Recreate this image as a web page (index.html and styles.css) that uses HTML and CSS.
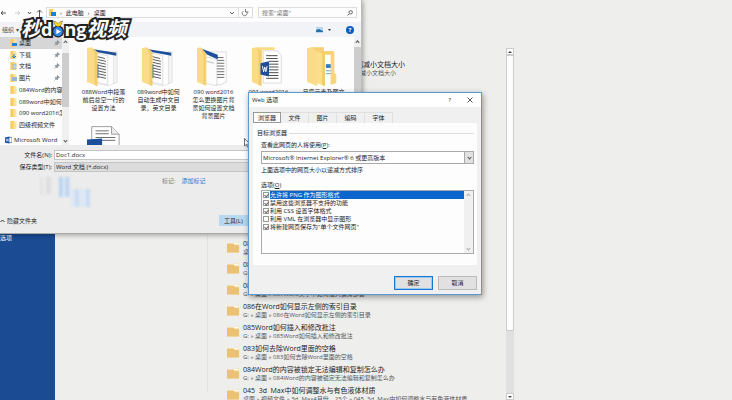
FILE: index.html
```html
<!DOCTYPE html>
<html lang="zh-CN">
<head>
    <meta charset="UTF-8">
    <meta name="viewport" content="width=device-width, initial-scale=1.0">
    <title>Web 选项</title>
    <link rel="stylesheet" href="styles.css">
</head>
<body>
    <!-- shared icons -->
    <svg class="sprite" aria-hidden="true">
        <symbol id="folder" viewBox="0 0 14 12">
            <path d="M0 2h7l1.500-1.500H13V12H0z" fill="#f3dfae"/>
            <path d="M8 1.300h4.500V3H7z" fill="#fff"/>
            <path d="M0 2.500h7L8.500 4H13v8H0z" fill="#ebc173"/>
        </symbol>
        <symbol id="mini" viewBox="0 0 6 8">
            <path d="M0 0h4l2 1v7H0z" fill="#fbe29b"/>
            <path d="M0 0h3v8H0z" fill="#f7cd62"/>
        </symbol>
        <symbol id="pin" viewBox="0 0 6 6">
            <path d="M3.500.5l2 2-1 .3-1 1L3.300 5 1 2.700l1.200-.2 1-1zM2 4L.5 5.500" fill="#8b98a5" stroke="#76838f" stroke-width=".6"/>
        </symbol>
        <symbol id="docs" viewBox="0 0 36 42">
            <path d="M12 5h19v32l-8 4-11-2z" fill="#fff" stroke="#ddd" stroke-width=".7"/>
            <path d="M28 5h4v32l-4 2z" fill="#f3f3f3" stroke="#ccc" stroke-width=".5"/>
            <path d="M5 2l26 4v3L10 5z" fill="#1d4f9a"/>
            <path d="M10 6l12 3v31l-12-3z" fill="#fcfcfc" stroke="#bbb" stroke-width=".5"/>
            <path d="M11 10l8 2M11 13l9 2M11 16l9 2M11 19l9 2M11 22l9 2M11 25l9 2M11 28l9 2M11 31l9 2" stroke="#555" stroke-width="1"/>
            <path d="M9 17l3 1v15l-3-1z" fill="#1d4f9a"/>
            <path d="M0 1l5-1 6 5v36L0 37z" fill="#fbdb87"/>
            <path d="M5 1l6 5v35l-3-1V7z" fill="#f2cb6d"/>
        </symbol>
        <symbol id="docs-plain" viewBox="0 0 36 42">
            <path d="M14 5h17v32l-6 3-11-2z" fill="#fff" stroke="#ccc" stroke-width=".7"/>
            <path d="M20 11h8M21 14h8M21 17h8M21 20h8M21 23h8M21 26h8M21 29h8M21 32h8" stroke="#666"/>
            <path d="M3 1l19 7v5L5 5z" fill="#1d4f9a"/>
            <path d="M8 10l13 3v28L8 38z" fill="#fcfcfc" stroke="#bbb" stroke-width=".5"/>
            <path d="M10 15l8 2" stroke="#bbb"/>
            <path d="M0 1l4-1 6 7v34L0 37z" fill="#fbdb87"/>
            <path d="M4 1l5 6v33l-2-1V8z" fill="#f2cb6d"/>
        </symbol>
        <symbol id="docs-word" viewBox="0 0 36 42">
            <path d="M12 4h15l4 5v29H12z" fill="#fff" stroke="#ccc" stroke-width=".7"/>
            <path d="M15 9h12M15 12h12M18 15h10M18 18h10M18 21h10M18 24h10M18 27h10M15 30h13M15 33h13" stroke="#444"/>
            <path d="M0 1l5-1h19v3H11l-1 38L0 37z" fill="#fbdb87"/>
            <path d="M5 1l5 4v36l-3-1V6z" fill="#f2cb6d"/>
            <path d="M9 17l9-2v16l-9-2z" fill="#1d4f9a"/>
            <path d="M11 20l1.300 6 1.200-5 1.200 5 1.300-6" fill="none" stroke="#fff" stroke-width="1"/>
        </symbol>
        <symbol id="folders" viewBox="0 0 36 42">
            <path d="M4 0h14v4h10v34L4 36z" fill="#f5cf72"/>
            <path d="M19 8h7v30h-7z" fill="#fff"/>
            <path d="M20 18h6v4h-6z" fill="#2f7bc4"/>
            <path d="M20 25h6M20 28h6" stroke="#56a2d8"/>
            <path d="M25 5h4v22l2 2v9l-6 2z" fill="#f7d47e"/>
            <path d="M0 1l5-1 6 5v36L0 37z" fill="#fbdb87"/>
            <path d="M10 4l9 4v33l-9-3z" fill="#fbdd8e"/>
            <path d="M16 7l3 1v33l-3-1z" fill="#f2cb6d"/>
        </symbol>
    </svg>

    <!-- backstage view behind the windows -->
    <main class="backstage">
        <aside class="bs-side"><a href="#">选项</a></aside>
        <div class="bs-mid"></div>
        <ul class="recent">
            <li class="first"><svg class="ico"></svg><div><h3>Word如何缩减小文档大小</h3><p>G: » 桌面 » Word缩减小文档大小</p></div></li>
            <li><svg class="ico"><use href="#folder"/></svg><div><h3>089word中如何自动生成</h3><p>桌面 » 089word中如何自动生成</p></div></li>
            <li><svg class="ico"><use href="#folder"/></svg><div><h3>088Word中段落前后</h3><p>G: » 桌面 » 088Word中段落前后</p></div></li>
            <li><svg class="ico"><use href="#folder"/></svg><div><h3>087Word文字中如何插入偏旁部首</h3><p>G: » 桌面 » 087Word文字中如何插入偏旁部首</p></div></li>
            <li><svg class="ico"><use href="#folder"/></svg><div><h3>086在Word如何显示左侧的索引目录</h3><p>G: » 桌面 » 086在Word如何显示左侧的索引目录</p></div></li>
            <li><svg class="ico"><use href="#folder"/></svg><div><h3>085Word如何插入和修改批注</h3><p>G: » 桌面 » 085Word如何插入和修改批注</p></div></li>
            <li><svg class="ico"><use href="#folder"/></svg><div><h3>083如何去除Word里面的空格</h3><p>G: » 桌面 » 083如何去除Word里面的空格</p></div></li>
            <li><svg class="ico"><use href="#folder"/></svg><div><h3>084Word的内容被锁定无法编辑和复制怎么办</h3><p>G: » 桌面 » 084Word的内容被锁定无法编辑和复制怎么办</p></div></li>
            <li><svg class="ico"><use href="#folder"/></svg><div><h3>045&nbsp; 3d&nbsp; Max中如何调整水与有色液体材质</h3><p>桌面 » 视频文件 » 3d&nbsp; Max4月份，25个 » 045&nbsp; 3d&nbsp; Max中如何调整水与有色液体材质</p></div></li>
        </ul>
        <div class="bs-scroll"><span class="arr up"></span><span class="thumb"></span><span class="arr down"></span></div>
    </main>

    <!-- save as window -->
    <section class="saveas">
        <div class="address">
            <svg class="nav-arrows" viewBox="0 0 46 10" fill="none" stroke="#555">
                <path d="M6 5H1M3 3L1 5l2 2"/>
                <path d="M15 5h5M18 3l2 2-2 2" stroke="#ccc"/>
                <path d="M28 4l1.500 2L31 4"/>
                <path d="M39.500 9V2M37 4.500L39.500 2 42 4.500"/>
            </svg>
            <div class="path">
                <svg class="pc" viewBox="0 0 7 8"><path d="M0 0h4v7H0z" fill="#f7cd62"/><path d="M2 3h5v4H2z" fill="#1b82d6"/></svg>
                <i>›</i><span>此电脑</span><i>›</i><span>桌面</span>
                <svg class="reload" viewBox="0 0 22 10" fill="none"><path d="M2 4l2 2 2-2" stroke="#666"/><path d="M10.500 0v10" stroke="#ddd"/><path d="M18.500 3.500a2.500 2.500 0 1 1-3-.5M17.500 1v3h3" stroke="#666" stroke-width=".8"/></svg>
            </div>
            <label class="search">
                <input type="text" placeholder='搜索"桌面"' aria-label="搜索">
                <svg viewBox="0 0 6 6" fill="none" stroke="#444" stroke-width=".8"><circle cx="3.700" cy="2.300" r="1.700"/><path d="M2.500 3.500L.5 5.500"/></svg>
            </label>
        </div>
        <div class="toolbar">
            <button class="organize">组织 ▾</button>
            <svg class="view" viewBox="0 0 16 6"><path d="M0 0h7v6H0z" fill="#b9d7ea"/><path d="M0 3l3-1 4 2v1H0z" fill="#2a70a8"/><path d="M12 2h3l-1.500 2z" fill="#333"/></svg>
            <button class="help" aria-label="帮助">?</button>
        </div>
        <div class="browse">
            <nav class="tree">
                <div class="tree-list">
                    <a href="#" class="on"><svg><use href="#mini"/><path d="M2 4h5v3H2z" fill="#1b82d6"/></svg><span>桌面</span><svg class="pin"><use href="#pin"/></svg></a>
                    <a href="#"><svg><use href="#mini"/><path d="M4 3v4M2.500 5L4 7l2-2" stroke="#1b82d6" fill="none"/></svg><span>下载</span><svg class="pin"><use href="#pin"/></svg></a>
                    <a href="#"><svg><use href="#mini"/><path d="M3 2h3v5H3z" fill="#c8dcea" stroke="#7899b0" stroke-width=".5"/></svg><span>文档</span><svg class="pin"><use href="#pin"/></svg></a>
                    <a href="#"><svg><use href="#mini"/><path d="M2 3h5v4H2z" fill="#8fb9d4"/></svg><span>图片</span><svg class="pin"><use href="#pin"/></svg></a>
                    <a href="#"><svg><use href="#mini"/></svg><span>084Word的内容</span></a>
                    <a href="#"><svg><use href="#mini"/></svg><span>089word中如何</span></a>
                    <a href="#"><svg><use href="#mini"/></svg><span>090 word2016怎</span></a>
                    <a href="#"><svg><use href="#mini"/></svg><span>四级视频文件</span></a>
                </div>
                <a href="#" class="word"><svg viewBox="0 0 8 8"><path d="M4 1h4v6H4z" fill="#fff" stroke="#1d4f9a" stroke-width=".7"/><path d="M0 1l5-1v8L0 7z" fill="#1d4f9a"/><path d="M1 2.500l.8 3 .8-3 .8 3 .7-3" stroke="#fff" stroke-width=".6" fill="none"/></svg><span>Microsoft Word</span></a>
            </nav>
            <div class="bar tree-bar"><span class="chev"></span><span class="grip"></span><span class="chev dn"></span></div>
            <div class="files">
                <figure><svg><use href="#docs"/></svg><figcaption>088Word中段落前后总空一行的设置方法</figcaption></figure>
                <figure><svg><use href="#docs"/></svg><figcaption>089word中如何自动生成中文目录，英文目录</figcaption></figure>
                <figure><svg><use href="#docs-plain"/></svg><figcaption>090 word2016怎么更换图片背景如何设置文档背景图片</figcaption></figure>
                <figure><svg><use href="#docs-word"/></svg><figcaption>091 word2016</figcaption></figure>
                <figure><svg><use href="#folders"/></svg><figcaption>月度元素及图文</figcaption></figure>
                <figure><svg viewBox="0 0 36 42"><path d="M5 .5h21l8 8V42H5z" fill="#fff" stroke="#999"/><path d="M26 .5v8h8" fill="#eee" stroke="#999"/><path d="M9 5h14M9 8h14M9 12h21M9 15h21" stroke="#666"/><path d="M0 14l16-1v20H0z" fill="#1d4f9a"/></svg></figure>
            </div>
            <div class="bar"><span class="chev"></span><span class="grip long"></span></div>
        </div>
        <form class="save-form">
            <div class="row"><label for="fname">文件名(N):</label><input id="fname" type="text" value="Doc1.docx"></div>
            <div class="row"><label for="ftype">保存类型(T):</label><select id="ftype"><option>Word 文档 (*.docx)</option></select></div>
            <div class="meta">
                <span class="smudge"></span>
                <span class="tag">标记:</span><a href="#">添加标记</a>
            </div>
            <div class="actions">
                <button type="button" class="hide"><svg viewBox="0 0 5 4"><path d="M.5 3l2-2 2 2" fill="none" stroke="#333"/></svg>隐藏文件夹</button>
                <button type="button" class="tools">工具(L)</button>
            </div>
        </form>
    </section>

    <svg class="cursor" viewBox="0 0 7 10"><path d="M.5.5v7.500l2-1.500 1 2.500 1.200-.5-1-2.500h2.300z" fill="#fff" stroke="#333" stroke-width=".7"/></svg>

    <!-- web options dialog -->
    <section class="dialog" role="dialog" aria-label="Web 选项">
        <header>
            <h2>Web 选项</h2>
            <button aria-label="帮助">?</button>
            <button aria-label="关闭"><svg viewBox="0 0 6 6"><path d="M.5.5l5 5M5.500.5l-5 5" stroke="#333" stroke-width=".8"/></svg></button>
        </header>
        <div class="tabs">
            <button class="active">浏览器</button>
            <button>文件</button>
            <button>图片</button>
            <button>编码</button>
            <button>字体</button>
        </div>
        <div class="panel">
            <h4>目标浏览器</h4>
            <label for="browser">查看此网页的人将使用(<u>P</u>):</label>
            <div class="combo">
                <select id="browser"><option>Microsoft® Internet Explorer® 6 或更高版本</option></select>
                <span class="drop"><i class="chev dn"></i></span>
            </div>
            <p>上面选项中的网页大小以递减方式排序</p>
            <div class="opt-title">选项(<u>O</u>)</div>
            <div class="options">
                <div class="checks">
                    <label class="sel"><input type="checkbox" checked><span>允许将 PNG 作为图形格式</span></label>
                    <label><input type="checkbox" checked><span>禁用这些浏览器不支持的功能</span></label>
                    <label><input type="checkbox" checked><span>利用 CSS 设置字体格式</span></label>
                    <label><input type="checkbox"><span>利用 VML 在浏览器中显示图形</span></label>
                    <label><input type="checkbox" checked><span>将新建网页保存为"单个文件网页"</span></label>
                </div>
                <div class="opt-bar"><i class="chev"></i><i class="chev dn"></i></div>
            </div>
        </div>
        <footer>
            <button class="ok">确定</button>
            <button>取消</button>
        </footer>
    </section>

    <div class="logo">
        <span>秒</span><span class="latin">d</span><svg viewBox="0 0 14 22">
            <circle cx="7" cy="14" r="7" fill="#222"/>
            <path d="M2 2l3 1 2 2 2-2 3-1-2 5-3 1.500L4 7z" fill="#f7d21c" stroke="#222" stroke-width=".8"/>
            <circle cx="7" cy="14" r="5.500" fill="#2f86ea"/>
            <path d="M5 11l5.500 3L5 17z" fill="#fff"/>
        </svg><span class="latin">ng</span><span>视频</span>
    </div>
</body>
</html>
```
FILE: styles.css
```css
* {
    margin: 0;
    padding: 0;
    box-sizing: border-box;
}

body {
    position: relative;
    height: 100vh;
    overflow: hidden;
    background: #eeeeed;
    color: #222;
    font-family: "Open Sans", "Noto Sans CJK SC", sans-serif;
    font-size: 6px;
    line-height: 8px;
}

button,
input,
select {
    font: inherit;
    color: inherit;
    border: none;
    background: none;
    appearance: none;
    border-radius: 0;
}

a {
    color: inherit;
    text-decoration: none;
}

h2, h3, h4 {
    font-weight: normal;
}

svg {
    flex: none;
    display: block;
}

.sprite {
    position: absolute;
    width: 0;
    height: 0;
}

.chev {
    display: block;
    width: 3px;
    height: 3px;
    border-left: 1px solid #555;
    border-top: 1px solid #555;
    transform: rotate(45deg);
}

.chev.dn {
    transform: rotate(225deg);
}

/* backstage */
.backstage {
    display: grid;
    grid-template-columns: 55px 153px 298px 8px 1fr;
    height: 100%;
}

.bs-side {
    background: #1a4b93;
    color: #fff;
    padding-top: 234px;
}

.bs-mid {
    border-right: 1px solid #e2e2e2;
    margin-bottom: 8px;
}

.recent {
    list-style: none;
    padding: 60px 0 0 19px;
    overflow: hidden;
}

.recent li {
    display: flex;
    gap: 3px;
    height: 21px;
    white-space: nowrap;
}

.recent .first {
    margin-bottom: 158px;
}

.recent .ico {
    width: 13px;
    height: 12px;
    margin-top: 2px;
}

.recent h3 {
    font-size: 7px;
    line-height: 9px;
}

.recent .first div {
    width: 162px;
    text-align: right;
}

.recent .first p {
    padding-right: 9px;
}

.recent p {
    color: #555;
}

.bs-scroll {
    display: flex;
    flex-direction: column;
    align-items: center;
    margin-top: 48px;
    background: #e0e0e0;
}

.bs-scroll .arr {
    display: flex;
    align-items: center;
    justify-content: center;
    width: 100%;
    height: 7px;
    background: #fff;
    border: 1px solid #ccc;
}

.arr::after {
    content: "";
    border: 2px solid transparent;
    border-top: none;
    border-bottom-color: #444;
}

.arr.down::after {
    transform: rotate(180deg);
}

.bs-scroll .thumb {
    width: 100%;
    height: 276px;
    background: #fdfdfd;
    border: 1px solid #ccc;
    margin-bottom: auto;
}

/* save as window */
.saveas {
    position: absolute;
    top: 0;
    left: 0;
    width: 362px;
    background: #fdfdfd;
    border-right: 1px solid #bbb;
    border-bottom: 1px solid #aaa;
    box-shadow: 1px 1px 5px rgba(0, 0, 0, 0.35);
}

.address {
    display: flex;
    align-items: center;
    height: 22px;
    padding: 7px 4px 4px 0;
}

.nav-arrows {
    width: 46px;
    height: 10px;
}

.path {
    flex: 1;
    display: flex;
    align-items: center;
    gap: 4px;
    height: 11px;
    padding: 0 2px;
    border: 1px solid #ddd;
}

.path i {
    font-style: normal;
}

.path .pc {
    width: 7px;
    height: 8px;
}

.path .reload {
    width: 22px;
    height: 10px;
    margin-left: auto;
}

.search {
    display: flex;
    align-items: center;
    width: 99px;
    height: 11px;
    margin-left: 5px;
    padding: 0 3px;
    border: 1px solid #ddd;
}

.search input {
    flex: 1;
    min-width: 0;
}

.search svg {
    width: 6px;
    height: 6px;
}

.toolbar {
    display: flex;
    align-items: center;
    height: 15px;
    padding: 0 7px 0 2px;
    background: #f1f3f6;
}

.organize {
    color: #456;
}

.view {
    width: 16px;
    height: 6px;
    margin-left: auto;
    margin-right: 14px;
}

.help {
    width: 8px;
    height: 8px;
    border-radius: 50%;
    background: #0c5cc0;
    color: #fff;
    font-weight: bold;
    line-height: 8px;
}

.browse {
    display: flex;
    height: 108px;
}

.tree {
    width: 62px;
    overflow: hidden;
    white-space: nowrap;
}

.tree-list {
    display: flex;
    flex-direction: column;
    height: 94px;
}

.tree-list a {
    flex: 1;
    display: flex;
    align-items: center;
    gap: 2px;
    padding-left: 10px;
}

.tree a svg {
    width: 7px;
    height: 8px;
}

.tree a .pin {
    width: 6px;
    height: 6px;
    margin-left: auto;
    margin-right: 2px;
}

.tree .on {
    background: #d6d6d6;
}

.tree .word {
    display: flex;
    align-items: center;
    gap: 2px;
    height: 14px;
    padding: 3px 0 0 5px;
}

.bar {
    display: flex;
    flex-direction: column;
    align-items: center;
    width: 7px;
    background: #f0f0f0;
    padding: 4px 0 3px;
}

.bar .grip {
    width: 100%;
    height: 54px;
    margin: 7px 0 auto;
    background: #cdcdcd;
}

.tree-bar .grip {
    margin-top: 9px;
}

.bar .grip.long {
    height: 100%;
    margin-top: 3px;
}

.files {
    flex: 1;
    display: grid;
    grid-template-columns: repeat(5, 55px);
    grid-template-rows: 70px 1fr;
    row-gap: 9px;
    padding: 9px 0 0 7px;
    overflow: hidden;
}

.files figure {
    display: flex;
    flex-direction: column;
    align-items: center;
    height: 70px;
}

.files svg {
    width: 34px;
    height: 42px;
}

.files figcaption {
    width: 45px;
    text-align: center;
    word-break: break-all;
}

.save-form {
    height: 88px;
    padding-top: 4px;
    background: #ececec;
}

.row {
    display: flex;
    align-items: center;
    height: 12px;
}

.row label {
    width: 54px;
    padding-right: 2px;
    text-align: right;
}

.row input,
.row select {
    flex: 1;
    height: 10px;
    padding: 0 1px;
    border: 1px solid #c4c4c4;
    background: #fff;
}

.row select {
    background: #dcdcdc;
}

.meta {
    display: flex;
    gap: 6px;
    height: 42px;
    padding: 4px 0 0 40px;
}

/* faded strip left of the tags */
.smudge {
    width: 52px;
    height: 31px;
    margin-right: 64px;
    background:
        linear-gradient(90deg, #e2e2e2 0 3px, transparent 3px 6px, #dedede 6px 11px, transparent 11px) 0 0 / 14px 17px no-repeat,
        linear-gradient(90deg, #b9d2ef 0 3px, #d4e3f4 3px 7px, #bcd2ed 7px 10px, #e0e9f4 10px) 19px 0 / 12px 20px no-repeat,
        linear-gradient(90deg, #dce8f5 0 4px, #cbdcf1 4px 8px, #dee8f4 8px 15px, #c9dbf2 15px) 31px 12px / 19px 18px no-repeat;
    filter: blur(1px);
}

.tag {
    color: #777;
}

.meta a {
    color: #1778d3;
}

.actions {
    display: flex;
    align-items: center;
    justify-content: space-between;
}

.hide {
    display: flex;
    align-items: center;
    gap: 2px;
}

.hide svg {
    width: 5px;
    height: 4px;
}

.tools {
    width: 142px;
    height: 11px;
    padding-left: 5px;
    background: #b5d8f3;
    text-align: left;
}

.cursor {
    position: absolute;
    left: 244px;
    top: 138px;
    width: 7px;
    height: 10px;
}

/* dialog */
.dialog {
    position: absolute;
    left: 248px;
    top: 92px;
    width: 234px;
    padding: 0 4px;
    background: #f0f0f0;
    border: 1px solid #5b9bd5;
    box-shadow: 1px 2px 6px rgba(0, 0, 0, 0.4);
}

.dialog header {
    display: flex;
    align-items: center;
    gap: 16px;
    height: 14px;
    margin: 0 -4px;
    padding: 0 8px 0 3px;
    background: #fff;
}

.dialog h2 {
    flex: 1;
    font-size: 6px;
}

.dialog header svg {
    width: 6px;
    height: 6px;
}

.tabs {
    display: flex;
    padding-top: 5px;
}

.tabs button {
    width: 28px;
    height: 11px;
    border: 1px solid #e0e0e0;
    border-bottom: none;
    border-left: none;
}

.tabs .active {
    background: #fff;
    border: 1px solid #999;
}

.panel {
    padding: 6px 3px 11px 8px;
    background: #fdfdfd;
}

.panel h4 {
    display: flex;
    align-items: center;
    gap: 2px;
    margin-left: -4px;
    font-size: 6px;
}

.panel h4::after {
    content: "";
    flex: 1;
    border-top: 1px solid #ddd;
}

.panel > label {
    display: block;
    margin: 4px 0 2px;
}

.combo {
    display: flex;
    height: 13px;
    border: 1px solid #aaa;
}

.combo select {
    flex: 1;
    padding-left: 1px;
    background: #fff;
}

.combo .drop {
    display: flex;
    align-items: center;
    justify-content: center;
    width: 9px;
    background: #e1e1e1;
    border-left: 1px solid #aaa;
}

.panel p {
    margin: 2px 0 7px;
}

.options {
    display: flex;
    height: 64px;
    margin-top: 1px;
    border: 1px solid #aaa;
}

.checks {
    flex: 1;
}

.checks label {
    display: flex;
    align-items: center;
    gap: 1px;
    height: 8px;
    padding-left: 1px;
}

.checks span {
    flex: 1;
}

.checks .sel span {
    background: #0a66cc;
    color: #fff;
}

.checks input {
    display: flex;
    justify-content: center;
    width: 6px;
    height: 6px;
    border: 1px solid #999;
    background: #fff;
}

.checks input:checked::after {
    content: "";
    width: 2px;
    height: 3px;
    border-right: 1px solid #666;
    border-bottom: 1px solid #666;
    transform: rotate(40deg);
}

.opt-bar {
    display: flex;
    flex-direction: column;
    align-items: center;
    justify-content: space-between;
    width: 9px;
    padding: 3px 0;
    background: #f0f0f0;
}

.opt-bar .chev {
    border-color: #aaa;
}

.dialog footer {
    display: flex;
    justify-content: flex-end;
    gap: 5px;
    padding: 11px 0 4px;
}

.dialog footer button {
    width: 39px;
    height: 14px;
    background: #e1e1e1;
    border: 1px solid #bbb;
}

.dialog footer .ok {
    border-color: #1778d3;
    box-shadow: inset 0 0 0 1px #9cc8ee;
}

/* watermark */
.logo {
    position: absolute;
    left: 21px;
    top: 16px;
    display: flex;
    align-items: center;
    height: 26px;
    color: #fff;
    font-size: 20px;
    font-weight: bold;
    font-style: italic;
    line-height: 26px;
    -webkit-text-stroke: 4px #222;
    paint-order: stroke fill;
}

.logo .latin {
    font-size: 18px;
    font-style: normal;
}

.logo svg {
    width: 12px;
    height: 20px;
}
```
